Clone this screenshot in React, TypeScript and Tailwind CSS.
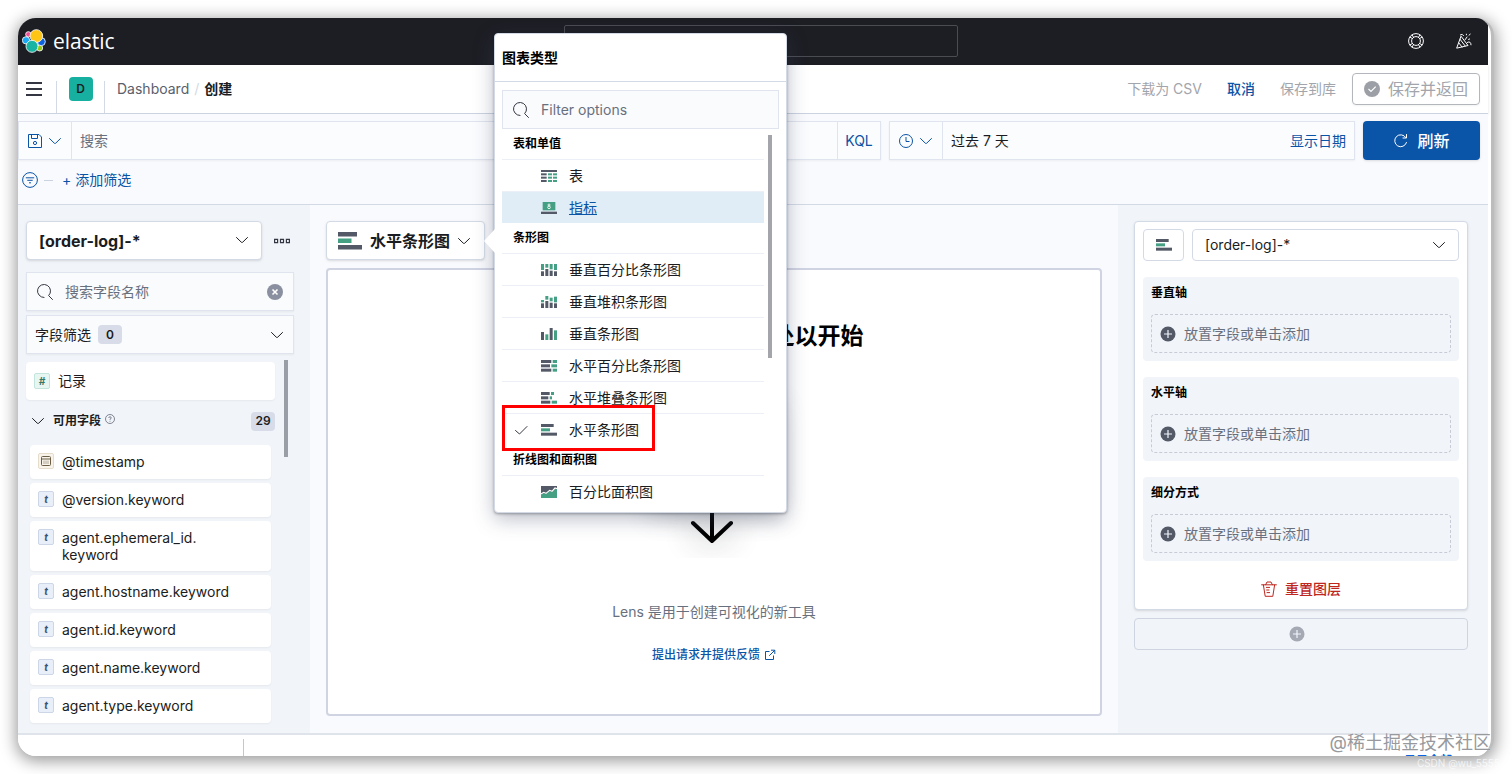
import clsx from 'clsx'

const GREEN = '#45a083'
const DARK = '#535966'

// x, y, width, height, fill
type Bar = [number, number, number, number, string]

const chartIcons: Record<string, Bar[]> = {
  table: [
    [0, 0, 48, 6, DARK],
    [0, 10, 17, 6, DARK],
    [21, 10, 12, 6, GREEN],
    [36, 10, 12, 6, GREEN],
    [0, 20, 17, 6, DARK],
    [21, 20, 12, 6, GREEN],
    [36, 20, 12, 6, GREEN],
    [0, 30, 17, 6, DARK],
    [21, 30, 12, 6, GREEN],
    [36, 30, 12, 6, GREEN],
  ],
  metric: [
    [5, 0, 38, 25, GREEN],
    [0, 29, 48, 7, DARK],
  ],
  barPercentage: [
    [0, 0, 9, 18, GREEN],
    [0, 22, 9, 14, DARK],
    [13, 0, 9, 11, GREEN],
    [13, 15, 9, 21, DARK],
    [26, 0, 9, 16, GREEN],
    [26, 20, 9, 16, DARK],
    [39, 0, 9, 18, GREEN],
    [39, 22, 9, 14, DARK],
  ],
  barStacked: [
    [0, 12, 9, 7, GREEN],
    [0, 22, 9, 14, DARK],
    [13, 0, 9, 11, GREEN],
    [13, 15, 9, 21, DARK],
    [26, 5, 9, 11, GREEN],
    [26, 20, 9, 16, DARK],
    [39, 2, 9, 17, GREEN],
    [39, 22, 9, 14, DARK],
  ],
  bar: [
    [0, 12, 9, 24, DARK],
    [13, 19, 9, 17, GREEN],
    [26, 0, 9, 36, DARK],
    [39, 7, 9, 29, GREEN],
  ],
  horizontalPercentage: [
    [0, 0, 31, 9, DARK],
    [35, 0, 13, 9, GREEN],
    [0, 13, 27, 9, DARK],
    [31, 13, 17, 9, GREEN],
    [0, 26, 31, 9, DARK],
    [35, 26, 13, 9, GREEN],
  ],
  horizontalStacked: [
    [0, 0, 26, 9, DARK],
    [30, 0, 9, 9, GREEN],
    [0, 13, 22, 9, DARK],
    [26, 13, 7, 9, GREEN],
    [0, 26, 28, 9, DARK],
    [32, 26, 16, 9, GREEN],
  ],
  horizontal: [
    [0, 0, 38, 9, DARK],
    [0, 13, 27, 9, GREEN],
    [0, 26, 48, 9, DARK],
  ],
  area: [[0, 0, 48, 36, DARK]],
}

const menu = [
  {
    title: '表和单值',
    items: [
      { label: '表', icon: 'table' },
      { label: '指标', icon: 'metric', active: true },
    ],
  },
  {
    title: '条形图',
    items: [
      { label: '垂直百分比条形图', icon: 'barPercentage' },
      { label: '垂直堆积条形图', icon: 'barStacked' },
      { label: '垂直条形图', icon: 'bar' },
      { label: '水平百分比条形图', icon: 'horizontalPercentage' },
      { label: '水平堆叠条形图', icon: 'horizontalStacked' },
      { label: '水平条形图', icon: 'horizontal', checked: true },
    ],
  },
  { title: '折线图和面积图', items: [{ label: '百分比面积图', icon: 'area' }] },
]

const fields = [
  { name: '@timestamp', type: 'date' },
  { name: '@version.keyword', type: 'text' },
  { name: 'agent.ephemeral_id.\nkeyword', type: 'text' },
  { name: 'agent.hostname.keyword', type: 'text' },
  { name: 'agent.id.keyword', type: 'text' },
  { name: 'agent.name.keyword', type: 'text' },
  { name: 'agent.type.keyword', type: 'text' },
]

const dimensions = ['垂直轴', '水平轴', '细分方式']

function ChartIcon({ name, className = 'w-4' }: { name: string; className?: string }) {
  return (
    <svg viewBox="0 0 48 36" className={clsx('shrink-0', className)} aria-hidden="true">
      {chartIcons[name].map(([x, y, width, height, fill]) => (
        <rect key={`${x}-${y}`} x={x} y={y} width={width} height={height} fill={fill} />
      ))}
      {name === 'metric' && (
        <g fill="none" stroke="#fff" strokeWidth="2.5">
          <circle cx="24" cy="9" r="3" />
          <circle cx="24" cy="16" r="4" />
        </g>
      )}
      {name === 'area' && (
        <>
          <path d="M0 26 L8 21 L15 24 L26 15 L33 18 L42 8 L48 10 V36 H0Z" fill={GREEN} />
          <path d="M0 24 L8 19 L15 22 L26 13 L33 16 L42 6 L48 8" fill="none" stroke="#fff" strokeWidth="3.5" />
        </>
      )}
    </svg>
  )
}

function Chevron({ className = '' }: { className?: string }) {
  return (
    <svg
      viewBox="0 0 16 16"
      className={clsx('pointer-events-none size-4 shrink-0', className)}
      fill="none"
      stroke="currentColor"
      strokeLinecap="round"
      strokeLinejoin="round"
      aria-hidden="true"
    >
      <path d="M2.5 5.5 L7.3 10.2 Q8 10.8 8.7 10.2 L13.5 5.5" />
    </svg>
  )
}

function SearchIcon() {
  return (
    <svg viewBox="0 0 16 16" className="size-4 shrink-0" fill="none" stroke="#343741" strokeLinecap="round" aria-hidden="true">
      <path d="M7 13.5 A6.5 6.5 0 1 1 11.6 11.6 L15.5 15.5" />
    </svg>
  )
}

function PlusCircle({ fill }: { fill: string }) {
  return (
    <svg viewBox="0 0 16 16" className="size-4 shrink-0" aria-hidden="true">
      <circle cx="8" cy="8" r="7.5" fill={fill} />
      <path d="M8 4V12M4 8H12" stroke="#f1f4fa" strokeWidth="1.2" />
    </svg>
  )
}

function ElasticLogo() {
  return (
    <svg viewBox="0 0 72 72" className="size-6" stroke="#fff" strokeWidth="2.5" aria-hidden="true">
      <circle cx="19" cy="16" r="8" fill="#f04e98" />
      <circle cx="12" cy="34" r="11" fill="#1ba9f5" />
      <circle cx="53" cy="57" r="9" fill="#93c90e" />
      <circle cx="58" cy="38" r="12" fill="#0b64dd" />
      <circle cx="43" cy="21" r="19" fill="#fec514" />
      <circle cx="30" cy="52" r="18" fill="#17b3a3" />
    </svg>
  )
}

function Header() {
  return (
    <header className="flex h-[47px] items-center justify-between bg-[#1d1e24] pr-4 pb-0.5 pl-1 text-white">
      <a href="#" className="flex items-center gap-[7px]">
        <ElasticLogo />
        <span className="font-['Open_Sans',sans-serif] text-[21px] leading-6">elastic</span>
      </a>
      <input
        type="search"
        aria-label="Search Elastic"
        className="h-8 w-[394px] rounded-xs border border-[#4a4c54] bg-[#1d1e24] px-3 text-sm"
      />
      <div className="flex items-center gap-8">
        <button aria-label="Help">
          <svg viewBox="0 0 16 16" className="size-4" fill="none" stroke="currentColor">
            <circle cx="8" cy="8" r="7.4" />
            <circle cx="8" cy="8" r="4.4" />
            <path d="M5.5 4.3 L4 1.8M4.3 5.5 L1.8 4M10.5 4.3 L12 1.8M11.7 5.5 L14.2 4M5.5 11.7 L4 14.2M4.3 10.5 L1.8 12M10.5 11.7 L12 14.2M11.7 10.5 L14.2 12" />
          </svg>
        </button>
        <button aria-label="News">
          <svg viewBox="0 0 16 16" className="size-4" fill="none" stroke="currentColor" strokeLinecap="round" strokeLinejoin="round">
            <path d="M0.8 14.8 L5 3.2 L11.8 12.2 Z M4 6.2 L9.2 13 M2.8 9.8 L6 14" />
            <path d="M4.4 1.8 Q6.5 0.2 7.6 2.6 M9.2 6.6 L11 4 M11.4 9.4 Q14.8 7.6 15 11.8 M12.6 6.4 L13.6 6 M13 2.2 L14.2 1.2 M10.4 1.2 V1.8" />
          </svg>
        </button>
      </div>
    </header>
  )
}

function NavBar() {
  return (
    <nav className="flex h-[49px] items-center border-b border-[#cbd2e0] bg-white px-2 text-sm shadow-sm">
      <button aria-label="Menu" className="flex w-4 flex-col gap-1">
        <span className="h-0.5 bg-[#343741]" />
        <span className="h-0.5 bg-[#343741]" />
        <span className="h-0.5 bg-[#343741]" />
      </button>
      <div className="ml-[14px] flex h-8 w-[49px] items-start justify-center self-end border-x border-[#d3dae6]">
        <span className="-mt-1 flex size-6 items-center justify-center rounded-sm bg-[#17b0a0] text-xs font-semibold">D</span>
      </div>
      <a href="#" className="ml-3 text-[#5a606b]">Dashboard</a>
      <span className="mx-[5px] text-[#d3dae6]">/</span>
      <span className="font-bold">创建</span>
      <div className="ml-auto flex items-center">
        <button className="text-[#a2a5ab]" disabled>下载为 CSV</button>
        <button className="ml-[25px] font-medium text-[#0a54a5]">取消</button>
        <button className="ml-[25px] text-[#a2a5ab]" disabled>保存到库</button>
        <button className="ml-4 flex h-8 items-center gap-2 rounded-sm border border-[#b3b6bb] px-[11px] text-base text-[#a2a5ab] shadow-xs" disabled>
          <svg viewBox="0 0 16 16" className="size-4">
            <circle cx="8" cy="8" r="8" fill="#9c9fa5" />
            <path d="M4.5 8 L7 10.5 L11.7 5.7" fill="none" stroke="#fff" strokeWidth="1.2" />
          </svg>
          保存并返回
        </button>
      </div>
    </nav>
  )
}

function QueryBar() {
  return (
    <section className="border-b border-[#d3dae6] bg-[#f9fafd] pt-[7px] text-sm">
      <div className="flex h-[39px] gap-2 pr-2">
        <div className="flex min-w-0 flex-1 border border-[#dfe4ee] bg-[#fbfcfe] shadow-xs">
          <button aria-label="Saved queries" className="flex w-[53px] items-center justify-center gap-1 border-r border-[#dfe4ee] text-[#0a54a5]">
            <svg viewBox="0 0 16 16" className="size-4" fill="none" stroke="currentColor">
              <path d="M1.5 1.5 H12 L14.5 4 V14.5 H1.5Z M4.5 1.5 V5.5 H10.5 V1.5" />
              <circle cx="8" cy="10" r="1.6" />
            </svg>
            <Chevron />
          </button>
          <input aria-label="搜索" placeholder="搜索" className="min-w-0 flex-1 px-2 placeholder-[#69707d]" />
          <button className="w-[43px] border-l border-[#dfe4ee] text-[#0a54a5]">KQL</button>
        </div>
        <div className="flex w-[466px] items-center border border-[#dfe4ee] bg-[#fbfcfe] shadow-xs">
          <button aria-label="Date quick select" className="flex h-full w-[53px] items-center justify-center gap-1 border-r border-[#dfe4ee] text-[#0a54a5]">
            <svg viewBox="0 0 16 16" className="size-4" fill="none" stroke="currentColor">
              <circle cx="8" cy="8" r="6.5" />
              <path d="M8 4 V8.5 H11.5" />
            </svg>
            <Chevron />
          </button>
          <span className="flex-1 px-2">过去 7 天</span>
          <button className="px-2 text-[#0a54a5]">显示日期</button>
        </div>
        <button className="flex w-[117px] items-center justify-center gap-2 rounded-sm bg-[#0b55a8] text-base font-medium text-white shadow-sm">
          <svg viewBox="0 0 16 16" className="size-4" fill="none" stroke="currentColor" strokeLinecap="round">
            <path d="M13.5 9.5 A6 6 0 1 1 12.8 4.5 M13.5 1.5 V5 H10" />
          </svg>
          刷新
        </button>
      </div>
      <div className="flex h-11 items-center pb-1 pl-1 text-[#0a54a5]">
        <button aria-label="Filter options">
          <svg viewBox="0 0 16 16" className="size-4" fill="none" stroke="currentColor">
            <circle cx="8" cy="8" r="7.4" />
            <path d="M3.8 5.8 H12.2 M5.3 8.3 H10.7 M7 10.8 H9" />
          </svg>
        </button>
        <span className="ml-[6px] h-px w-[9px] bg-[#cbd2e0]" />
        <button className="ml-[9px]">+ 添加筛选</button>
      </div>
    </section>
  )
}

function FieldToken({ type }: { type: string }) {
  return (
    <span
      className={clsx(
        'flex size-4 shrink-0 items-center justify-center rounded-xs border text-[10px] leading-none font-bold italic',
        type === 'number' && 'border-[#c3e5dd] bg-[#e8f6f2] text-[#387765]',
        type === 'date' && 'border-[#e6dccb] bg-[#f8f4ec] text-[#6b5f47]',
        type === 'text' && 'border-[#ccd6e6] bg-[#e9eff8] text-[#395576]',
      )}
    >
      {type === 'number' && '#'}
      {type === 'text' && 't'}
      {type === 'date' && (
        <svg viewBox="0 0 12 12" className="size-3" fill="none" stroke="currentColor">
          <rect x="1.5" y="1.5" width="9" height="9" rx="1" />
          <path d="M1.5 4H10.5" />
          <path d="M4 5.5V9M6 5.5V9M8 5.5V9" strokeWidth="0.5" />
        </svg>
      )}
    </span>
  )
}

function Count({ children }: { children: string }) {
  return <span className="flex h-[19px] min-w-6 items-center justify-center rounded-sm bg-[#d8dce8] px-1 text-xs font-semibold">{children}</span>
}

function FieldPanel() {
  return (
    <aside className="w-[292px] shrink-0 overflow-hidden bg-[#f1f4f9] pt-4 pr-4 pl-2 text-sm">
      <div className="flex items-center">
        <div className="relative flex-1">
          <select
            aria-label="Index pattern"
            className="block h-[39px] w-full appearance-none rounded-sm border border-[#d3dae6] bg-white px-3 text-base font-bold shadow-sm"
          >
            <option>[order-log]-*</option>
          </select>
          <Chevron className="absolute top-[11px] right-3" />
        </div>
        <button aria-label="Index pattern actions" className="mr-1 ml-3">
          <svg viewBox="0 0 16 16" className="size-4" fill="none" stroke="#343741" strokeWidth="1.2">
            <path d="M0.6 6.4H3.6V9.6H0.6Z M6.5 6.4H9.5V9.6H6.5Z M12.4 6.4H15.4V9.6H12.4Z" />
          </svg>
        </button>
      </div>
      <div className="mt-3 flex h-[39px] items-center gap-3 border border-[#dfe4ee] bg-[#fafbfd] px-[10px] shadow-xs">
        <SearchIcon />
        <input aria-label="搜索字段名称" placeholder="搜索字段名称" className="min-w-0 flex-1 placeholder-[#69707d]" />
        <button aria-label="Clear">
          <svg viewBox="0 0 16 16" className="size-4">
            <circle cx="8" cy="8" r="8" fill="#8a90a0" />
            <path d="M5.5 5.5 L10.5 10.5 M10.5 5.5 L5.5 10.5" stroke="#fff" strokeWidth="1.6" />
          </svg>
        </button>
      </div>
      <button className="mt-1 flex h-[39px] w-full items-center gap-[7px] border border-[#dfe4ee] bg-[#fafbfd] px-2 shadow-xs">
        字段筛选
        <Count>0</Count>
        <Chevron className="ml-auto" />
      </button>
      <div className="mt-[6px] flex gap-[9px]">
        <div className="flex-1">
          <button className="mt-0.5 flex h-[38px] w-full items-center gap-2 rounded-sm bg-white px-2 shadow-xs">
            <FieldToken type="number" />
            记录
          </button>
          <button className="mt-[9px] flex h-6 w-full items-center pl-1 text-xs font-bold">
            <Chevron />
            <span className="ml-[7px]">可用字段</span>
            <svg viewBox="0 0 12 12" className="mb-1 ml-1 size-[10px]" fill="none" stroke="#69707d">
              <circle cx="6" cy="6" r="5.4" />
              <path d="M4.5 4.8 Q4.5 3.3 6 3.3 T7.5 4.8 Q7.5 5.6 6 6.2 V7 M6 8.2 V9.2" />
            </svg>
            <span className="ml-auto"><Count>29</Count></span>
          </button>
          <ul className="mt-3 space-y-1 px-1">
            {fields.map((field) => (
              <li key={field.name}>
                <button className="flex w-full gap-2 rounded-sm bg-white px-2 py-2 text-left leading-[17px] whitespace-pre-line shadow-xs">
                  <FieldToken type={field.type} />
                  <span className="min-h-[18px]">{field.name}</span>
                </button>
              </li>
            ))}
          </ul>
        </div>
        <div className="mr-[6px] h-[97px] w-1 bg-[#9a9ea6]" />
      </div>
    </aside>
  )
}

function ChartTypePopover() {
  return (
    <div className="absolute -top-[188px] left-[168px] z-20 h-[480px] w-[293px] rounded-sm border border-[#d3dae6] bg-white shadow-[0_6px_20px_rgba(60,70,100,0.35),0_1px_3px_rgba(0,0,0,0.35)]">
      <svg viewBox="0 0 11 24" className="absolute top-[195px] -left-[11px] h-6 w-[11px]">
        <path d="M11 0 L0 12 L11 24Z" fill="#fff" />
      </svg>
      <h2 className="flex h-12 items-center border-b border-[#d3dae6] px-[7px] text-sm font-bold text-black">图表类型</h2>
      <label className="mx-[7px] mt-2 flex h-[39px] items-center gap-3 border border-[#dfe4ee] bg-[#fafbfd] px-[10px]">
        <SearchIcon />
        <input aria-label="Filter options" placeholder="Filter options" className="min-w-0 flex-1 text-sm placeholder-[#69707d]" />
      </label>
      <div className="flex pl-[7px]">
        <div className="w-[262px]">
          {menu.map((group) => (
            <div key={group.title}>
              <h3 className="flex h-[30px] items-center pl-[11px] text-xs font-bold text-black">{group.title}</h3>
              <ul>
                {group.items.map((item) => (
                  <li key={item.label} className="relative border-t border-[#eceff5]">
                    <button
                      className={clsx(
                        'flex h-[31px] w-full items-center pl-[11px] text-sm',
                        item.active && 'bg-[#e0ecf6] text-[#0a54a5] underline',
                      )}
                    >
                      <span className="mr-3 w-4">
                        {item.checked && (
                          <svg viewBox="0 0 16 16" className="size-4" fill="none" stroke="#343741" strokeLinecap="round">
                            <path d="M2.5 8.5 L6.5 12 L14 4.5" />
                          </svg>
                        )}
                      </span>
                      <ChartIcon name={item.icon} />
                      <span className="ml-3">{item.label}</span>
                    </button>
                    {item.checked && <div className="absolute -top-[9px] left-0 h-[46px] w-[153px] border-3 border-[#fe0000]" />}
                  </li>
                ))}
              </ul>
            </div>
          ))}
        </div>
        <div className="mt-[6px] ml-1 h-[223px] w-1 bg-[#a3a5aa]" />
      </div>
    </div>
  )
}

function Workspace() {
  return (
    <main className="flex min-w-0 flex-1 flex-col bg-[#f9fafd] px-4 pt-4 pb-[17px] text-sm">
      <div className="relative self-start">
        <button className="flex h-[39px] w-[159px] items-center rounded-sm border border-[#d3dae6] bg-white px-[11px] text-base font-bold shadow-sm">
          <ChartIcon name="horizontal" className="w-6" />
          <span className="mr-[6px] ml-2 whitespace-nowrap">水平条形图</span>
          <Chevron />
        </button>
        <ChartTypePopover />
      </div>
      <div className="mt-2 flex min-h-0 flex-1 flex-col items-center rounded-sm border-2 border-[#d0d3e2] bg-white pt-[52px]">
        <h1 className="text-[23px] leading-7 font-bold text-black">将一些字段拖放到此处以开始</h1>
        <svg viewBox="0 0 200 232" className="mt-1 h-[232px] w-[200px] shrink-0 overflow-visible" aria-hidden="true">
          <defs>
            <filter id="soft" x="-50%" y="-50%" width="200%" height="200%">
              <feGaussianBlur stdDeviation="14" />
            </filter>
          </defs>
          <rect x="36" y="50" width="128" height="110" fill="#343741" opacity="0.25" filter="url(#soft)" />
          <ellipse cx="98" cy="180" rx="26" ry="12" fill="#343741" opacity="0.15" filter="url(#soft)" />
          <rect x="28" y="30" width="144" height="110" rx="4" fill="#fff" />
          <path d="M98 110 V187 M79 169 L98 187 L117 169" fill="none" stroke="#000" strokeWidth="4" strokeLinecap="round" strokeLinejoin="round" />
        </svg>
        <p className="mt-4 text-[#69707d]">Lens 是用于创建可视化的新工具</p>
        <a href="#" className="mt-[25px] flex items-center gap-1 text-xs font-medium text-[#0a54a5]">
          提出请求并提供反馈
          <svg viewBox="0 0 12 12" className="size-3" fill="none" stroke="currentColor">
            <path d="M5.5 2.5 H1.5 V10.5 H9.5 V6.5 M7 1.2 H10.8 V5 M10.8 1.2 L5.2 6.8" />
          </svg>
        </a>
      </div>
    </main>
  )
}

function LayerPanel() {
  return (
    <aside className="w-[370px] shrink-0 bg-[#f1f4f9] pt-4 pr-5 pl-4 text-sm">
      <section className="rounded-sm border border-[#d3dae6] bg-white px-2 pt-[7px] pb-[10px] shadow-sm">
        <div className="flex gap-2">
          <button aria-label="Layer chart type" className="flex h-8 w-[41px] items-center justify-center rounded-sm border border-[#d3dae6]">
            <ChartIcon name="horizontal" />
          </button>
          <div className="relative flex-1">
            <select aria-label="Layer index pattern" className="block h-8 w-full appearance-none rounded-sm border border-[#d3dae6] bg-white px-3">
              <option>[order-log]-*</option>
            </select>
            <Chevron className="absolute top-2 right-3" />
          </div>
        </div>
        <div className="mt-4 space-y-4">
          {dimensions.map((name) => (
            <div key={name} className="rounded-sm bg-[#f1f4f9] px-2 pt-2 pb-2">
              <h3 className="text-xs leading-4 font-bold text-black">{name}</h3>
              <button className="mt-[13px] flex h-[39px] w-full items-center gap-2 rounded-sm border border-dashed border-[#c6cbd6] px-2 text-[#69707d]">
                <PlusCircle fill="#535966" />
                放置字段或单击添加
              </button>
            </div>
          ))}
        </div>
        <button className="mx-auto mt-[18px] flex items-center gap-2 font-medium text-[#bd271e]">
          <svg viewBox="0 0 16 16" className="size-4" fill="none" stroke="currentColor" strokeLinecap="round" strokeLinejoin="round">
            <path d="M0.6 3.8 H15.4 M4.6 3.8 L6 1 H10 L11.4 3.8 M2.4 4 L4.2 15.3 H11.8 L13.6 4 M5.4 6.4 H8.6 M5.6 9 H8 M6 11.6 H8.6" />
          </svg>
          重置图层
        </button>
      </section>
      <button aria-label="Add layer" className="mt-2 flex h-8 w-full items-center justify-center rounded-sm border border-[#cfd5e0] pr-2">
        <PlusCircle fill="#a4a9b3" />
      </button>
    </aside>
  )
}

export default function App() {
  return (
    <div className="relative h-screen bg-white p-[18px] font-['Inter','Noto_Sans_CJK_SC',sans-serif] text-[#1a1c21]">
      <div className="flex h-full flex-col overflow-hidden rounded-[18px] border-r-3 border-[#bcbcbc] bg-white pr-[3px] shadow-[0_3px_16px_2px_rgba(0,0,0,0.4)]">
        <Header />
        <NavBar />
        <QueryBar />
        <div className="flex min-h-0 flex-1">
          <FieldPanel />
          <Workspace />
          <LayerPanel />
        </div>
        <footer className="flex h-[23px] shrink-0 items-start justify-between border-t-2 border-[#dfe3ea] bg-white">
          <div className="mt-1 h-5 w-[226px] border-r border-[#c3c7cf]" />
          <a href="#" className="mt-[18px] mr-9 text-xs font-bold text-[#0b64dd]">显示全部</a>
        </footer>
      </div>
      <div className="pointer-events-none absolute right-[21px] bottom-[19px] z-30 text-lg leading-6 text-[#97999d] [text-shadow:0_0_1px_#fff]">
        @稀土掘金技术社区
      </div>
      <div className="pointer-events-none absolute right-3 bottom-[3px] text-[10px] leading-4 text-white/70">CSDN @wu_5555</div>
    </div>
  )
}
